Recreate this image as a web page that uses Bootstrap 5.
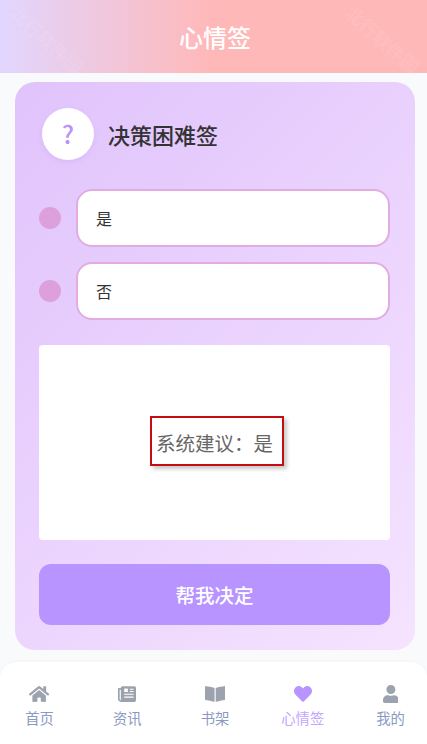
<!DOCTYPE html>
<html lang="zh"><head><meta charset="utf-8">
<link rel="stylesheet" href="https://cdn.jsdelivr.net/npm/bootstrap@5.3.0/dist/css/bootstrap.min.css">
<style>
html,body{height:744px;overflow:hidden}
body{background:#f9fafb;font-family:"Noto Sans CJK SC",sans-serif;width:427px;position:relative}
.top-bar{position:relative;height:73px;padding-left:3px;background:linear-gradient(90deg,#e2d6ff 0%,#ffb8b8 50%,#ffb8b8 100%);font-size:24px;font-weight:500}
.panel{margin:9px 12px 0 15px;height:568px;border-radius:20px;padding:26px 25px 0 24px;background:linear-gradient(135deg,#e0c3fc 0%,#f5e3ff 100%)}
.q-circle{width:52px;height:52px;margin-left:3px;background:#fff;box-shadow:0 2px 5px rgba(160,110,230,.15);color:#b794f6;font-size:25px;font-weight:500}
.panel-title{font-size:22px;font-weight:500;color:#333;margin-left:14px}
.opt-row{margin-bottom:15px}
.opt-row.first{margin-top:29px}
.opt-dot{width:22px;height:22px;background:#dda0dd;flex:none}
.opt-box{height:58px;margin-left:15px;border:2px solid #e2acE2;border-radius:16px;background:#fff;padding-left:18px;font-size:16px;color:#333}
.result{height:195px;margin-top:25px;background:#fff;border-radius:4px}
.result-text{font-size:19.5px;color:#666;line-height:47px;padding:3px 11px 0 6px;margin:-3px 0 0 5px;outline:2px solid #c40d12;outline-offset:-2px;box-shadow:3px 3px 4px rgba(0,0,0,.22)}
.go-btn{height:61px;margin-top:24px;background:#b794ff;border:0;border-radius:12px;color:#fff;font-size:19.5px;font-weight:500;width:100%}
.go-btn:hover{background:#b794ff;color:#fff}
.tabbar{position:absolute;left:0;right:0;top:662px;height:82px;background:#fff;border-radius:16px 16px 0 0;box-shadow:0 -1px 3px rgba(0,0,0,.03);padding:23px 2px 0;display:grid;grid-template-columns:repeat(5,75px);column-gap:12.75px}
.tab-item{color:#8b9ac2;font-size:14.3px;line-height:22px}
.tab-item svg{height:18px;width:auto;fill:#9ca3af;display:block;margin:0 auto 4px}
.tab-item.on{color:#c4a5ff}.tab-item.on svg{fill:#b794ff}
.wmark{position:absolute;font-size:18px;line-height:20px;color:rgba(255,255,255,.1);transform:rotate(42deg);white-space:nowrap;pointer-events:none}
.w1{left:2px;top:29px}.w2{left:338px;top:29px}
</style></head><body>
<header class="top-bar d-flex align-items-center justify-content-center text-white">心情签<span class="wmark w1" aria-hidden="true">北行软件园</span><span class="wmark w2" aria-hidden="true">北行软件园</span></header>
<main class="panel">
  <div class="d-flex align-items-center">
    <div class="q-circle rounded-circle d-flex align-items-center justify-content-center">?</div>
    <div class="panel-title">决策困难签</div>
  </div>
  <div class="opt-row first d-flex align-items-center"><span class="opt-dot rounded-circle"></span><div class="opt-box flex-grow-1 d-flex align-items-center">是</div></div>
  <div class="opt-row d-flex align-items-center"><span class="opt-dot rounded-circle"></span><div class="opt-box flex-grow-1 d-flex align-items-center">否</div></div>
  <div class="result d-flex align-items-center justify-content-center"><span class="result-text">系统建议&#xFF1A;是</span></div>
  <button class="btn go-btn" type="button">帮我决定</button>
</main>
<nav class="tabbar text-center">
  <div class="tab-item"><svg viewBox="0 0 576 512"><path d="M280.37 148.26L96 300.11V464a16 16 0 0 0 16 16l112.06-.29a16 16 0 0 0 15.92-16V368a16 16 0 0 1 16-16h64a16 16 0 0 1 16 16v95.64a16 16 0 0 0 16 16.05L464 480a16 16 0 0 0 16-16V300L295.67 148.26a12.19 12.19 0 0 0-15.3 0zM571.6 251.47L488 182.56V44.05a12 12 0 0 0-12-12h-56a12 12 0 0 0-12 12v72.61L318.47 43a48 48 0 0 0-61 0L4.34 251.47a12 12 0 0 0-1.6 16.9l25.5 31A12 12 0 0 0 45.15 301l235.22-193.74a12.19 12.19 0 0 1 15.3 0L530.9 301a12 12 0 0 0 16.9-1.6l25.5-31a12 12 0 0 0-1.7-16.93z"/></svg>首页</div>
  <div class="tab-item"><svg viewBox="0 0 512 512"><path fill-rule="evenodd" d="M128 32h336c26 0 48 22 48 48v352c0 26-22 48-48 48H80c-44 0-80-36-80-80V112c0-13 11-24 24-24h56V80c0-26 22-48 48-48zM48 136v264c0 18 14 32 32 32V136zM176 112v72c0 9 7 16 16 16h72c9 0 16-7 16-16v-72c0-9-7-16-16-16h-72c-9 0-16 7-16 16zM336 104v32h104v-32zM336 168v32h104v-32zM176 248v32h264v-32zM176 328v32h264v-32z"/></svg>资讯</div>
  <div class="tab-item"><svg viewBox="0 0 576 512"><path d="M542.22 32.05c-54.8 3.11-163.72 14.43-230.96 55.59-4.64 2.84-7.27 7.89-7.27 13.17v363.87c0 11.55 12.63 18.85 23.28 13.49 69.18-34.82 169.23-44.32 218.7-46.92 16.89-.89 30.02-14.43 30.02-30.66V62.75c.01-17.71-15.35-31.74-33.77-30.7zM264.73 87.64C197.5 46.48 88.58 35.17 33.78 32.05 15.36 31.01 0 45.04 0 62.75V400.6c0 16.24 13.13 29.78 30.02 30.66 49.49 2.6 149.59 12.11 218.77 46.95 10.62 5.35 23.21-1.94 23.21-13.46V100.63c0-5.29-2.62-10.14-7.27-12.99z"/></svg>书架</div>
  <div class="tab-item on"><svg viewBox="0 0 512 512"><path d="M462.3 62.6C407.5 15.9 326 24.3 275.7 76.2L256 96.5l-19.7-20.3C186.1 24.3 104.5 15.9 49.7 62.6c-62.8 53.6-66.1 149.8-9.9 207.9l193.5 199.8c12.5 12.9 32.8 12.9 45.3 0l193.5-199.8c56.3-58.1 53-154.3-9.8-207.9z"/></svg>心情签</div>
  <div class="tab-item"><svg viewBox="0 0 448 512"><path d="M224 256c70.7 0 128-57.3 128-128S294.7 0 224 0 96 57.3 96 128s57.3 128 128 128zm89.6 32h-16.7c-22.2 10.2-46.9 16-72.9 16s-50.6-5.8-72.9-16h-16.7C60.2 288 0 348.2 0 422.4V464c0 26.5 21.5 48 48 48h352c26.5 0 48-21.5 48-48v-41.6c0-74.2-60.2-134.4-134.4-134.4z"/></svg>我的</div>
</nav>
<script src="https://cdn.jsdelivr.net/npm/bootstrap@5.3.0/dist/js/bootstrap.bundle.min.js"></script>
</body></html>
